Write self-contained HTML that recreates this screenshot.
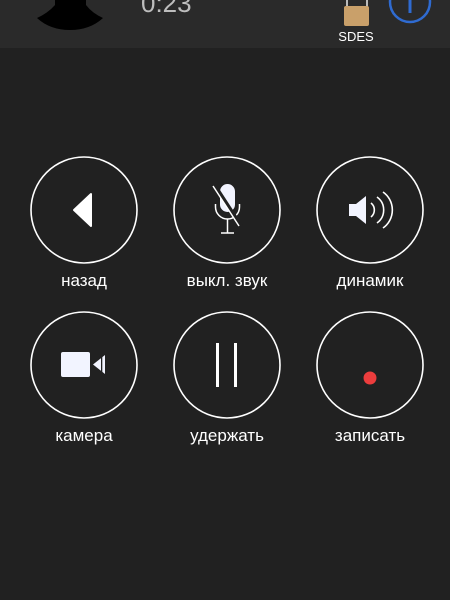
<!DOCTYPE html>
<html><head><meta charset="utf-8"><style>
html,body{margin:0;padding:0;width:450px;height:600px;background:#212121;overflow:hidden;font-family:"Liberation Sans",sans-serif;}
svg{display:block}
</style></head><body>
<svg width="450" height="600" viewBox="0 0 450 600" xmlns="http://www.w3.org/2000/svg">
<rect width="450" height="600" fill="#212121"/>
<rect width="450" height="48" fill="#2a2a2a"/>
<path d="M55 0 L86 0 L86 5 Q92 13 103 18 Q90 30 70 30 Q50 30 37 18 Q48 13 55 5 Z" fill="#000"/>
<text x="141" y="12" font-size="26" fill="#bdbdbd">0:23</text>
<path d="M347 8 L347 0 M367 8 L367 0" stroke="#bbb" stroke-width="2"/>
<rect x="344" y="6" width="25" height="20" rx="2" fill="#c9a06a"/>
<text x="356" y="41" font-size="13" fill="#fff" text-anchor="middle">SDES</text>
<circle cx="410" cy="2" r="20" fill="none" stroke="#2f6bd1" stroke-width="2.5"/>
<rect x="408.5" y="0" width="3" height="13" fill="#2f6bd1"/>
<g fill="none" stroke="#fff" stroke-width="1.6">
<circle cx="84" cy="210" r="53"/>
<circle cx="227" cy="210" r="53"/>
<circle cx="370" cy="210" r="53"/>
<circle cx="84" cy="365" r="53"/>
<circle cx="227" cy="365" r="53"/>
<circle cx="370" cy="365" r="53"/>
</g>
<path d="M91 194 L91 226 L74 210 Z" fill="#fff" stroke="#fff" stroke-width="2" stroke-linejoin="round"/>
<rect x="220" y="184" width="15" height="28" rx="7.5" fill="#f2f4ff"/>
<path d="M215.5 204 v3 a12 12 0 0 0 24 0 v-3" fill="none" stroke="#fff" stroke-width="1.5"/>
<path d="M227.5 219 v14 M221 233 h13" stroke="#fff" stroke-width="1.5"/>
<path d="M215 186 L241 226" stroke="#212121" stroke-width="4"/>
<path d="M213 186 L239 226" stroke="#fff" stroke-width="1.5"/>
<path d="M349 204 h7 l10 -8 v28 l-10 -8 h-7 z" fill="#f2f4ff"/>
<g fill="none" stroke="#fff" stroke-width="1.6">
<path d="M371 203 a9 9 0 0 1 0 14"/>
<path d="M377 197 a16 16 0 0 1 0 26"/>
<path d="M383 192 a22 22 0 0 1 0 36"/>
</g>
<rect x="61" y="352" width="29" height="25" rx="2" fill="#f2f4ff"/>
<path d="M93 364.5 L105 355 L105 374 Z" fill="#f2f4ff"/>
<rect x="101" y="355" width="1.3" height="19" fill="#212121"/>
<rect x="216" y="343" width="3" height="44" fill="#fff"/>
<rect x="234" y="343" width="3" height="44" fill="#fff"/>
<circle cx="370" cy="378" r="6.5" fill="#ec3d3d"/>
<g font-size="17" fill="#fff" text-anchor="middle">
<text x="84" y="286">назад</text>
<text x="227" y="286">выкл. звук</text>
<text x="370" y="286">динамик</text>
<text x="84" y="441">камера</text>
<text x="227" y="441">удержать</text>
<text x="370" y="441">записать</text>
</g>
</svg>
</body></html>
